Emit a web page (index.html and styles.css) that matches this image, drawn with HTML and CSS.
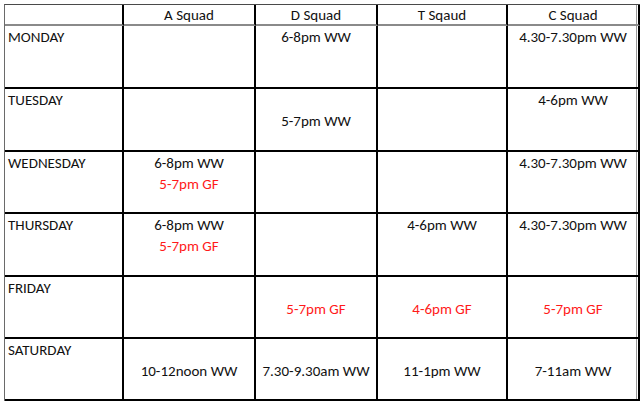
FILE: index.html
```html
<!DOCTYPE html>
<html lang="en">
<head>
<meta charset="utf-8">
<title>Squad Timetable</title>
<link rel="stylesheet" href="styles.css">
</head>
<body>
<div class="page">
  <div class="timetable">
    <div class="cell head"></div>
    <div class="cell head">A Squad</div>
    <div class="cell head">D Squad</div>
    <div class="cell head">T Sqaud</div>
    <div class="cell head last">C Squad</div>

    <div class="cell day">MONDAY</div>
    <div class="cell slot"></div>
    <div class="cell slot"><div class="ln">6-8pm WW</div></div>
    <div class="cell slot"></div>
    <div class="cell slot last"><div class="ln">4.30-7.30pm WW</div></div>

    <div class="cell day">TUESDAY</div>
    <div class="cell slot"></div>
    <div class="cell slot"><div class="ln">&nbsp;</div><div class="ln">5-7pm WW</div></div>
    <div class="cell slot"></div>
    <div class="cell slot last"><div class="ln">4-6pm WW</div></div>

    <div class="cell day">WEDNESDAY</div>
    <div class="cell slot"><div class="ln">6-8pm WW</div><div class="ln gf">5-7pm GF</div></div>
    <div class="cell slot"></div>
    <div class="cell slot"></div>
    <div class="cell slot last"><div class="ln">4.30-7.30pm WW</div></div>

    <div class="cell day">THURSDAY</div>
    <div class="cell slot"><div class="ln">6-8pm WW</div><div class="ln gf">5-7pm GF</div></div>
    <div class="cell slot"></div>
    <div class="cell slot"><div class="ln">4-6pm WW</div></div>
    <div class="cell slot last"><div class="ln">4.30-7.30pm WW</div></div>

    <div class="cell day">FRIDAY</div>
    <div class="cell slot"></div>
    <div class="cell slot"><div class="ln">&nbsp;</div><div class="ln gf">5-7pm GF</div></div>
    <div class="cell slot"><div class="ln">&nbsp;</div><div class="ln gf">4-6pm GF</div></div>
    <div class="cell slot last"><div class="ln">&nbsp;</div><div class="ln gf">5-7pm GF</div></div>

    <div class="cell day">SATURDAY</div>
    <div class="cell slot"><div class="ln">&nbsp;</div><div class="ln">10-12noon WW</div></div>
    <div class="cell slot"><div class="ln">&nbsp;</div><div class="ln">7.30-9.30am WW</div></div>
    <div class="cell slot"><div class="ln">&nbsp;</div><div class="ln">11-1pm WW</div></div>
    <div class="cell slot last"><div class="ln">&nbsp;</div><div class="ln">7-11am WW</div></div>
  </div>
</div>
</body>
</html>
```

FILE: styles.css
```css
html, body {
  margin: 0;
  padding: 0;
  background: #ffffff;
  overflow: hidden;
}

.page {
  padding: 4px 0 0 4px;
}

.timetable {
  display: grid;
  grid-template-columns: 119px 132px 122px 130px 132px;
  grid-template-rows: 21px 63px 63px 62px 63px 62px 62px;
  border-top: 1px solid #4a4a4a;
  border-left: 1px solid #6a6a6a;
  width: max-content;
  font-family: Calibri, Carlito, Lato, "Liberation Sans", sans-serif;
  font-size: 15px;
  line-height: 21px;
  color: #111111;
}

.cell {
  box-sizing: border-box;
  border-right: 2px solid #000000;
  border-bottom: 2px solid #000000;
  padding-top: 1px;
  text-align: center;
  white-space: nowrap;
}

.head {
  border-bottom: 2px solid #8a8a8a;
  padding-top: 0;
  line-height: 20px;
}

.day {
  text-align: left;
  padding-left: 3px;
}

.last {
  box-shadow: inset -1px 0 0 #ffffff, inset -2px 0 0 #9a9a9a;
}

.gf {
  color: #ff1a1a;
}
```
